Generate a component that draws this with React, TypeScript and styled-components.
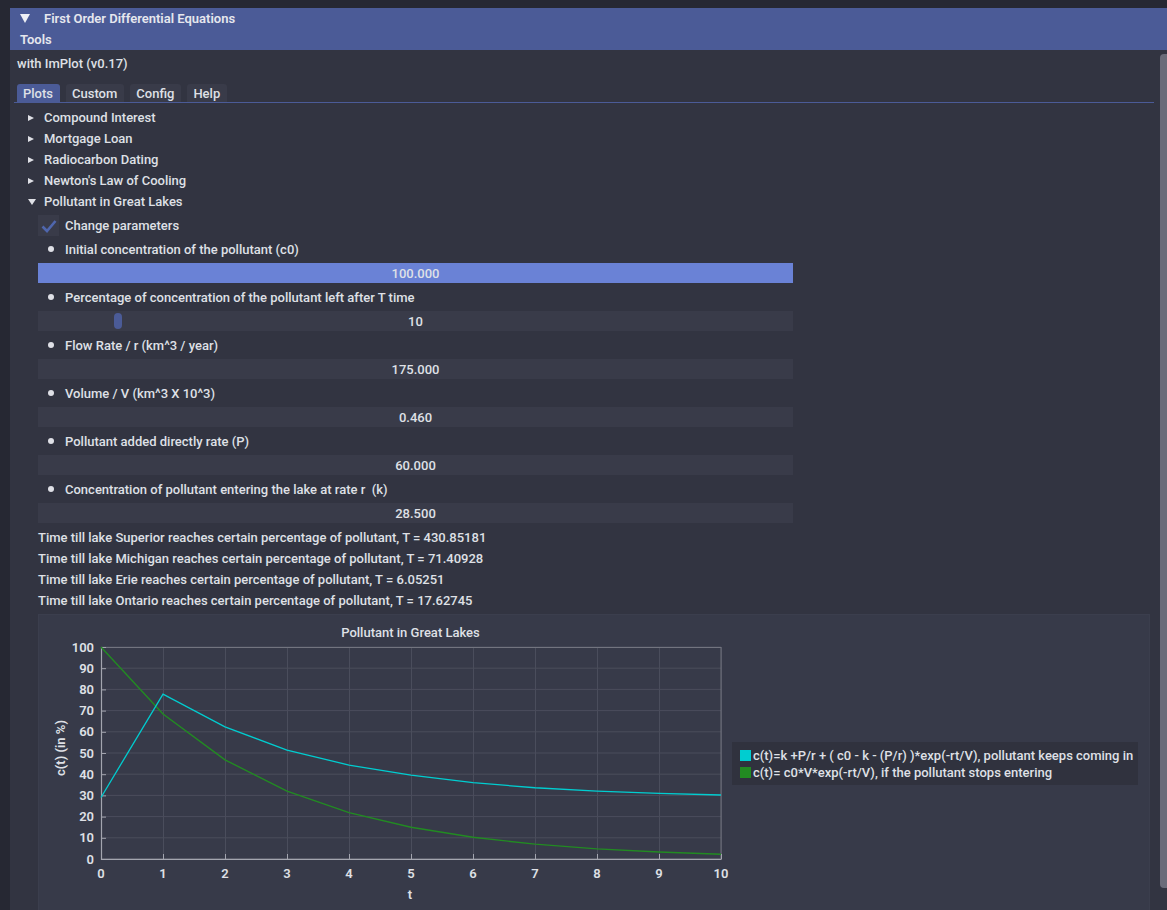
import React from 'react';
import styled, { createGlobalStyle } from 'styled-components';

const Global = createGlobalStyle`
  html, body { margin: 0; padding: 0; background: #262833; overflow: hidden; }
  body {
    font-family: Roboto, "Noto Sans", "Liberation Sans", sans-serif;
    font-size: 13px;
    font-weight: 500;
    color: #dfe0e6;
  }
  * { box-sizing: border-box; }
`;

const Screen = styled.div`
  width: 1167px;
  height: 910px;
  padding: 8px 0 0 10px;
  overflow: hidden;
`;

const Window = styled.div`
  width: 1157px;
  height: 902px;
  background: #323441;
  display: flex;
  flex-direction: column;
  overflow: hidden;
`;

const BlueBar = styled.div<{ $gap?: number }>`
  height: 21px;
  flex: none;
  background: #4b5b97;
  display: flex;
  align-items: center;
  padding-left: 10px;
  gap: ${(p) => p.$gap ?? 0}px;
  font-weight: 600;
  color: #e6e7ee;
`;

const TitleArrow = styled.span`
  width: 0;
  height: 0;
  border-left: 5px solid transparent;
  border-right: 5px solid transparent;
  border-top: 9px solid #eef0f6;
`;

const Body = styled.div`
  flex: 1;
  display: flex;
  min-height: 0;
`;

const Content = styled.div`
  width: 1150px;
  flex: none;
  display: flex;
  flex-direction: column;
  padding: 4px 6px 0 7px;
`;

const ScrollThumb = styled.div`
  width: 7px;
  height: 834px;
  margin-top: 4px;
  background: #6a6b79;
  border-radius: 4px 0 0 4px;
  flex: none;
`;

const Line = styled.div<{ $h?: number }>`
  height: ${(p) => p.$h ?? 18}px;
  display: flex;
  align-items: center;
  white-space: nowrap;
`;

const TabBar = styled.div`
  margin: 12px 0 0 -3px;
  padding-left: 3px;
  display: flex;
  gap: 6px;
  border-bottom: 1px solid #4b5b97;
  height: 19px;
`;

const Tab = styled.div<{ $active?: boolean }>`
  height: 18px;
  padding: 0 7px 0 6px;
  display: flex;
  align-items: center;
  border-radius: 3px 3px 0 0;
  background: ${(p) => (p.$active ? '#4b5b97' : '#393b49')};
`;

const Tree = styled.div`
  margin-top: 4px;
  display: flex;
  flex-direction: column;
`;

const TreeRow = styled.div`
  height: 21px;
  display: flex;
  align-items: center;
  padding-left: 11px;
  gap: 10px;
`;

const Arrow = styled.span<{ $open?: boolean }>`
  width: 0;
  height: 0;
  flex: none;
  ${(p) =>
    p.$open
      ? `border-left: 4px solid transparent; border-right: 4px solid transparent; border-top: 6px solid #dfe0e6; margin-right: -2px;`
      : `border-top: 3.5px solid transparent; border-bottom: 3.5px solid transparent; border-left: 6px solid #dfe0e6;`}
`;

const CheckRow = styled.div`
  margin-top: 3px;
  height: 21px;
  display: flex;
  align-items: center;
  gap: 6px;
  padding-left: 21px;
`;

const CheckBox = styled.div`
  width: 21px;
  height: 21px;
  background: #393b49;
  display: flex;
  align-items: center;
  justify-content: center;
`;

const Params = styled.div`
  margin-top: 3px;
  display: flex;
  flex-direction: column;
  gap: 4px;
`;

const BulletRow = styled.div`
  height: 20px;
  display: flex;
  align-items: center;
  padding-left: 31px;
  gap: 11px;
  white-space: pre;
`;

const Dot = styled.span`
  width: 6px;
  height: 6px;
  border-radius: 50%;
  background: #dfe0e6;
  flex: none;
`;

const Slider = styled.div<{ $active?: boolean }>`
  position: relative;
  margin-left: 21px;
  width: 755px;
  height: 20px;
  background: ${(p) => (p.$active ? '#6a82d6' : '#393b49')};
  display: flex;
  align-items: center;
  justify-content: center;
`;

const Grab = styled.span`
  position: absolute;
  top: 2px;
  width: 8px;
  height: 16px;
  border-radius: 4px;
  background: #4b5b97;
`;

const Results = styled.div`
  margin-top: 4px;
  display: flex;
  flex-direction: column;
`;

const ResultLine = styled.div`
  height: 21px;
  display: flex;
  align-items: center;
  padding-left: 21px;
  white-space: nowrap;
`;

const PlotFrame = styled.div`
  margin: 3px 0 0 21px;
  width: 1112px;
  flex: 1;
  background: #373a49;
  border: 1px solid #3b3e4d;
  border-bottom: none;
  display: flex;
`;

const ChartColumn = styled.div`
  width: 693px;
  display: flex;
  flex-direction: column;
`;

const PlotTitle = styled.div`
  padding: 9px 12px 0 62px;
  line-height: 18px;
  text-align: center;
`;

const ChartSvg = styled.svg`
  overflow: visible;
  display: block;
`;

const Legend = styled.div`
  align-self: flex-start;
  margin-top: 127px;
  width: 406px;
  padding: 5px 8px 4px 8px;
  background: #30323e;
  display: flex;
  flex-direction: column;
`;

const LegendItem = styled.div`
  height: 17px;
  display: flex;
  align-items: center;
  gap: 2px;
  white-space: nowrap;
`;

const Swatch = styled.span<{ $c: string }>`
  width: 11px;
  height: 11px;
  background: ${(p) => p.$c};
  flex: none;
`;

const CYAN = '#00cdd0';
const GREEN = '#228b22';

const cyanData = [29, 77.8, 62.3, 51.4, 44.3, 39.6, 36, 33.6, 32, 31, 30.2];
const greenData = Array.from({ length: 11 }, (_, t) => 100 * Math.exp(-0.38 * t));

const px = (t: number) => 100 + t * 62;
const py = (v: number) => 859 - v * 2.12;

const toPoints = (d: number[]) => d.map((v, t) => `${px(t)},${py(v)}`).join(' ');

const Chart: React.FC = () => {
  const xs = Array.from({ length: 11 }, (_, i) => i);
  const ys = Array.from({ length: 11 }, (_, i) => i * 10);
  const txt = { fill: '#dfe0e6', fontSize: 13, fontWeight: 600, fontFamily: 'Roboto, sans-serif' } as const;
  return (
    <ChartSvg width={693} height={268} viewBox="38 642 693 268">
      {xs.map((t) => (
        <line key={'gx' + t} x1={px(t) + 0.5} x2={px(t) + 0.5} y1={647} y2={859} stroke="#4a4d5c" strokeWidth={1} />
      ))}
      {ys.map((v) => (
        <line key={'gy' + v} x1={100} x2={720} y1={py(v)} y2={py(v)} stroke="#4a4d5c" strokeWidth={1} />
      ))}
      <rect x={100.5} y={647.5} width={619.5} height={211.5} fill="none" stroke="#72747f" strokeWidth={1} />
      <line x1={100} x2={720.5} y1={859.5} y2={859.5} stroke="#a3a5af" strokeWidth={1.2} />
      <line x1={100.5} x2={100.5} y1={647} y2={860} stroke="#a3a5af" strokeWidth={1.2} />
      {xs.map((t) => (
        <line key={'tx' + t} x1={px(t) + 0.5} x2={px(t) + 0.5} y1={854} y2={859} stroke="#a3a5af" strokeWidth={1} />
      ))}
      {ys.map((v) => (
        <line key={'ty' + v} x1={100} x2={105} y1={py(v) + 0.5} y2={py(v) + 0.5} stroke="#a3a5af" strokeWidth={1} />
      ))}
      <polyline points={toPoints(greenData)} fill="none" stroke={GREEN} strokeWidth={1.4} />
      <polyline points={toPoints(cyanData)} fill="none" stroke={CYAN} strokeWidth={1.3} />
      {ys.map((v) => (
        <text key={'ly' + v} x={93} y={py(v) + 4.5} textAnchor="end" {...txt}>
          {v}
        </text>
      ))}
      {xs.map((t) => (
        <text key={'lx' + t} x={px(t)} y={877.5} textAnchor="middle" {...txt}>
          {t}
        </text>
      ))}
      <text x={409} y={898.5} textAnchor="middle" {...txt}>
        t
      </text>
      <text x={59} y={748} textAnchor="middle" dominantBaseline="central" transform="rotate(-90 59 748)" {...txt}>
        c(t) (in %)
      </text>
    </ChartSvg>
  );
};

const CheckMark: React.FC = () => (
  <svg width={16} height={14} viewBox="0 0 16 14">
    <polyline points="1.5,7.5 6,12 14.5,2" fill="none" stroke="#4f66ad" strokeWidth={2.6} />
  </svg>
);

const params: { label: string; value: string; active?: boolean; grab?: number }[] = [
  { label: 'Initial concentration of the pollutant (c0)', value: '100.000', active: true },
  { label: 'Percentage of concentration of the pollutant left after T time', value: '10', grab: 76 },
  { label: 'Flow Rate / r (km^3 / year)', value: '175.000' },
  { label: 'Volume / V (km^3 X 10^3)', value: '0.460' },
  { label: 'Pollutant added directly rate (P)', value: '60.000' },
  { label: 'Concentration of pollutant entering the lake at rate r  (k)', value: '28.500' },
];

const lakes: [string, string][] = [
  ['Superior', '430.85181'],
  ['Michigan', '71.40928'],
  ['Erie', '6.05251'],
  ['Ontario', '17.62745'],
];

export default function App() {
  return (
    <>
      <Global />
      <Screen>
        <Window>
          <BlueBar $gap={14}>
            <TitleArrow />
            <span>First Order Differential Equations</span>
          </BlueBar>
          <BlueBar>Tools</BlueBar>
          <Body>
            <Content>
              <Line $h={18}>with ImPlot (v0.17)</Line>
              <TabBar>
                <Tab $active>Plots</Tab>
                <Tab>Custom</Tab>
                <Tab>Config</Tab>
                <Tab>Help</Tab>
              </TabBar>
              <Tree>
                {['Compound Interest', 'Mortgage Loan', 'Radiocarbon Dating', "Newton's Law of Cooling"].map((n) => (
                  <TreeRow key={n}>
                    <Arrow />
                    <span>{n}</span>
                  </TreeRow>
                ))}
                <TreeRow>
                  <Arrow $open />
                  <span>Pollutant in Great Lakes</span>
                </TreeRow>
              </Tree>
              <CheckRow>
                <CheckBox>
                  <CheckMark />
                </CheckBox>
                <span>Change parameters</span>
              </CheckRow>
              <Params>
                {params.map((p) => (
                  <React.Fragment key={p.label}>
                    <BulletRow>
                      <Dot />
                      <span>{p.label}</span>
                    </BulletRow>
                    <Slider $active={p.active}>
                      {p.grab !== undefined && <Grab style={{ left: p.grab }} />}
                      <span>{p.value}</span>
                    </Slider>
                  </React.Fragment>
                ))}
              </Params>
              <Results>
                {lakes.map(([n, v]) => (
                  <ResultLine key={n}>
                    Time till lake {n} reaches certain percentage of pollutant, T = {v}
                  </ResultLine>
                ))}
              </Results>
              <PlotFrame>
                <ChartColumn>
                  <PlotTitle>Pollutant in Great Lakes</PlotTitle>
                  <Chart />
                </ChartColumn>
                <Legend>
                  <LegendItem>
                    <Swatch $c={CYAN} />
                    <span>c(t)=k +P/r + ( c0 - k - (P/r) )*exp(-rt/V), pollutant keeps coming in</span>
                  </LegendItem>
                  <LegendItem>
                    <Swatch $c={GREEN} />
                    <span>c(t)= c0*V*exp(-rt/V), if the pollutant stops entering</span>
                  </LegendItem>
                </Legend>
              </PlotFrame>
            </Content>
            <ScrollThumb />
          </Body>
        </Window>
      </Screen>
    </>
  );
}
